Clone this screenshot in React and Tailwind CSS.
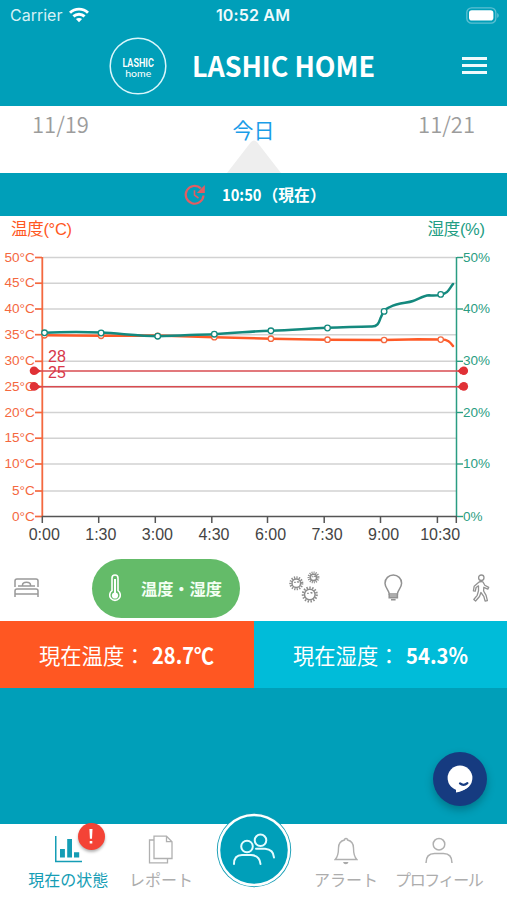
import React from "react";

const ORANGE = "#f4683f";
const GREEN = "#2a9d82";

function StatusBar() {
  return (
    <div className="flex h-[30px] items-center justify-between pl-[10px] pr-[8px] text-white">
      <div className="flex w-[147px] items-center gap-[7px]">
        <span className="font-['Inter'] text-[16px] leading-[20px] tracking-[0px] text-[#d5f1f6]">Carrier</span>
        <svg width="20" height="16" viewBox="0 0 20 16" fill="none" stroke="#fff" strokeWidth="2.9">
          <path d="M1 5.8C6 0.9 14 0.9 19 5.8" />
          <path d="M4.4 9.4C7.6 6.5 12.4 6.5 15.6 9.4" />
          <path d="M10 15.2L6.9 12.1C8.6 10.6 11.4 10.6 13.1 12.1Z" fill="#fff" stroke="none" />
        </svg>
      </div>
      <span className="font-['Inter'] text-[16px] font-semibold leading-[20px] tracking-[0.15px] text-[#effafc]">10:52 AM</span>
      <div className="flex w-[150px] justify-end">
        <svg width="33" height="17" viewBox="0 0 33 17">
          <rect x="0.8" y="0.8" width="29" height="15.4" rx="4.8" fill="none" stroke="#5cc0d2" strokeWidth="1.3" />
          <rect x="3" y="3.2" width="24.4" height="10.4" rx="2.8" fill="#fff" />
          <path d="M31.2 6v5q1.6-.8 1.6-2.5t-1.6-2.5" fill="#5cc0d2" />
        </svg>
      </div>
    </div>
  );
}

function Header() {
  return (
    <header className="h-[106px] bg-[#009fb9]">
      <StatusBar />
      <div className="flex h-[72px] items-center pl-[109px] pr-[20px]">
        <svg width="58" height="58" viewBox="0 0 58 58" fill="#fff">
          <circle cx="29" cy="29" r="27.8" fill="none" stroke="#d9f6fb" strokeWidth="1.5" />
          <text x="13.4" y="30" fontFamily="Roboto, sans-serif" fontSize="12.6" fontWeight="600" textLength="31.4" lengthAdjust="spacingAndGlyphs">LASHIC</text>
          <text x="16.2" y="40.2" fontFamily="Lato, sans-serif" fontSize="9" textLength="26" lengthAdjust="spacingAndGlyphs">home</text>
        </svg>
        <h1 className="ml-[25px]">
          <svg className="block overflow-visible" width="184" height="40">
            <text x="0" y="30.5" fill="#fff" fontSize="27.5" fontWeight="700" textLength="183" lengthAdjust="spacingAndGlyphs">LASHIC HOME</text>
          </svg>
        </h1>
        <div className="-mt-px ml-auto flex flex-col gap-[4px]">
          <div className="h-[3px] w-[25px] bg-[#effafc]" />
          <div className="h-[3px] w-[25px] bg-[#effafc]" />
          <div className="h-[3px] w-[25px] bg-[#effafc]" />
        </div>
      </div>
    </header>
  );
}

function DateRow() {
  return (
    <div className="flex h-[67px] justify-between bg-white pl-[32px] pr-[32px] text-[#9c9c9c]">
      <span className="mt-[2px] w-[60px] text-[22px] font-[350] leading-[30px]">11/19</span>
      <div className="flex flex-col items-center">
        <span className="mt-[8px] text-[21px] leading-[30px] text-[#1a9de8]">今日</span>
        <svg className="-mt-[5px]" width="54" height="34" viewBox="0 0 54 34">
          <path d="M0 34L24 3Q27 0 30 3L54 34Z" fill="#eee" />
        </svg>
      </div>
      <span className="mt-[2px] w-[60px] text-right text-[22px] font-[350] leading-[30px]">11/21</span>
    </div>
  );
}

function TimeBar() {
  return (
    <div className="flex h-[43px] items-center bg-[#009fb9] pl-[183px]">
      <svg width="24" height="24" viewBox="0 0 24 24" fill="none" stroke="#e35d62" strokeWidth="2.2">
        <path d="M20.5 12.5A8.9 8.9 0 1 1 17.8 5.4" />
        <path d="M11.5 7.2v5l4 2.8" strokeWidth="1.6" />
        <path d="M21.8 2v8h-8Z" fill="#e35d62" stroke="none" />
      </svg>
      <svg className="ml-[15px] block overflow-visible" width="100" height="24" fill="#fff" fontWeight="700">
        <text x="0" y="18" fontSize="16.5" textLength="39.5" lengthAdjust="spacingAndGlyphs">10:50</text>
        <text x="40.5" y="18" fontSize="15.8">（現在）</text>
      </svg>
    </div>
  );
}

const gridY = [41.5, 67.2, 93, 118.7, 145.3, 170.6, 196.5, 222.2, 248, 275, 300.5];
const tempLabels = ["50°C", "45°C", "40°C", "35°C", "30°C", "25°C", "20°C", "15°C", "10°C", "5°C", "0°C"];
const humLabels = [
  ["50%", 41.5], ["40%", 93], ["30%", 145.3], ["20%", 196.5], ["10%", 248], ["0%", 300.5],
];
const times = ["0:00", "1:30", "3:00", "4:30", "6:00", "7:30", "9:00", "10:30"];
const tempDots = [119.3, 119.8, 119.8, 121.2, 122.7, 123.7, 124, 123.6];
const humDots = [116.8, 117, 120.2, 118.2, 114.8, 112, 95.4, 78.4];

function Chart() {
  return (
    <svg className="block bg-white" width="507" height="329" viewBox="0 0 507 329" fontFamily="'Liberation Sans', sans-serif">
      <g fontSize="16.5">
        <text x="11" y="19" fill="#ff5722" fontFamily="'Liberation Sans','Noto Sans CJK JP',sans-serif" textLength="61">温度(°C)</text>
        <text x="427.5" y="19" fill="#229d83" fontFamily="'Liberation Sans','Noto Sans CJK JP',sans-serif" textLength="57.5">湿度(%)</text>
      </g>
      {gridY.slice(0, -1).map((y) => (
        <path key={y} d={`M43 ${y}H456`} stroke="#d2d2d2" strokeWidth="1.6" />
      ))}
      {gridY.map((y, i) => (
        <g key={y}>
          <path d={`M35 ${y}h7`} stroke={ORANGE} strokeWidth="1.7" />
          <text x="34.8" y={y + 4} textAnchor="end" fontSize="13.6" fill={ORANGE}>{tempLabels[i]}</text>
        </g>
      ))}
      {humLabels.map(([label, y]) => (
        <g key={label}>
          <path d={`M457 ${y}h6`} stroke={GREEN} strokeWidth="1.4" />
          <text x="463" y={y + 4} fontSize="13.5" fill={GREEN}>{label}</text>
        </g>
      ))}
      <path d="M42.3 41v260" stroke={ORANGE} strokeWidth="1.8" />
      <path d="M456.5 41v260" stroke={GREEN} strokeWidth="1.5" />
      <path d="M42 300.5H457" stroke="#555" strokeWidth="1.6" />
      {[42.3, 98.7, 155.3, 211.8, 267.5, 324.2, 380.5, 437.4, 456.3].map((x) => (
        <path key={x} d={`M${x} 300v7`} stroke="#555" strokeWidth="1.5" />
      ))}
      {times.map((t, i) => (
        <text key={t} x={44.3 + i * 56.55} y="324.4" textAnchor="middle" fontSize="16" fill="#444">{t}</text>
      ))}
      <path stroke="#ff5a27" fill="none" strokeLinecap="round" strokeWidth="2.5" d="M44 119.3L101 119.8L158 119.5L214 121.2L271 122.7L327 123.7L384 124C400 124 408 123.5 418 123.3L441 123.6C448 123.5 450 126 453 130" />
      {tempDots.map((y, i) => (
        <circle key={i} cx={44.5 + i * 56.6} cy={y} r="2.7" fill="#fff" stroke="#f4683f" strokeWidth="1.3" />
      ))}
      <path d="M44 116.8C65 115.8 82 115.8 101 116.5C120 117.5 140 120 158 120.2C180 119.7 195 118.7 214 118.2C240 117 250 115.2 271 114.7C293 114.5 306 112.3 327 111.8C347 111.5 357 110.5 372 110.6C379 110.5 379 105 381 101C384 93 386 93 390 91C399 86.5 407 87.3 413 85C418 83.5 423 79.6 429 79.3C434 80 438 79.4 441 78.3C448 77.8 449 73 453 68" fill="none" stroke="#14897e" strokeWidth="2.5" strokeLinecap="round" />
      {humDots.map((y, i) => (
        <circle key={i} cx={44.5 + i * 56.6} cy={y} r="2.8" fill="#fff" stroke="#14897e" strokeWidth="1.3" />
      ))}
      {[155, 170.7].map((y) => (
        <g key={y} fill="#e03136">
          <path d={`M34 ${y}H463`} stroke="#d84b50" strokeWidth="1.5" />
          <circle cx="34" cy={y - 0.3} r="4.3" />
          <path d={`M36 ${y - 3.5}L41 ${y}L36 ${y + 3.5}Z`} />
          <circle cx="463.8" cy={y - 0.3} r="4.3" />
          <path d={`M461 ${y - 3.5}L457.5 ${y}L461 ${y + 3.5}Z`} />
        </g>
      ))}
      <g fill="#d7374a" fontSize="16">
        <text x="48" y="146">28</text>
        <text x="48" y="161.8">25</text>
      </g>
    </svg>
  );
}

function Gear({ x, y, r }) {
  const circumference = 2 * Math.PI * (r + 1.6);
  const tooth = circumference / 30;
  return (
    <g fill="none" stroke="#8c8c8c">
      <circle cx={x} cy={y} r={r} strokeWidth="1.5" />
      <circle cx={x} cy={y} r={r + 1.6} strokeWidth="2.3" strokeDasharray={`${tooth} ${tooth}`} />
      <path d={`M${x - r * 0.5} ${y - r * 0.2}h1.6M${x + 0.6} ${y - r * 0.35}h1.4v1`} strokeWidth="1.2" />
    </g>
  );
}

function SensorTabs() {
  return (
    <div className="flex h-[76px] items-center bg-white pl-[14px]">
      <svg className="mt-[10px]" width="26" height="22" viewBox="0 0 26 22" fill="none" stroke="#999" strokeWidth="1.5">
        <path d="M1 10V4Q1 2 3 2H22Q24 2 24 4V10M4 9H21M8.5 9V8Q8.5 5.2 12.5 5.2T16.5 8V9" />
        <path d="M1 20V14Q1 12 3 12H22Q24 12 24 14V20M1 17H24" />
      </svg>
      <div className="ml-[52px] mt-[10px] flex h-[59px] w-[148px] items-center rounded-full bg-[#64bb69]">
        <svg className="ml-[17px]" width="12" height="28" viewBox="0 0 12 28" fill="none" stroke="#fff">
          <path d="M3 16.7V4Q3 1 6 1T9 4V16.7A5.3 5.3 0 1 1 3 16.7Z" strokeWidth="1.6" />
          <circle cx="6" cy="21.5" r="3.1" fill="#fff" stroke="none" />
          <path d="M6 5v15" strokeWidth="2" />
        </svg>
        <span className="ml-[20px] whitespace-nowrap text-[16.2px] font-bold leading-[24px] text-[#f4fff4]">温度・湿度</span>
      </div>
      <svg className="ml-[48px] mt-[9px]" width="33" height="33" viewBox="0 0 33 33">
        <Gear x={8.3} y={12.3} r={4.3} />
        <Gear x={25.5} y={6.4} r={3.2} />
        <Gear x={21.8} y={23.5} r={5.3} />
      </svg>
      <svg className="ml-[63px] mt-[9px]" width="19" height="28" viewBox="0 0 19 28" fill="none" stroke="#929292" strokeWidth="1.5">
        <path d="M5.2 20C5.2 16.5 1 13.8 1 9.2A8.3 8.2 0 0 1 17.6 9.2C17.6 13.8 13.4 16.5 13.4 20Z" />
        <path d="M5.2 20v3.7h8.2V20M5.2 22h8.2M7 25.8h4.6" />
      </svg>
      <svg className="ml-[69px] mt-[9px]" width="18" height="28" viewBox="0 0 18 28" fill="none" stroke="#929292" strokeWidth="1.3" strokeLinejoin="round">
        <circle cx="9.3" cy="3.7" r="2.7" />
        <path d="M6.8 8.3Q8.6 6.9 11 8L12.8 11.3L16.7 13.4L15.8 15.1L11.8 13.3L11.6 17L14.1 21.4L15.4 26.6L13.1 27L11.8 22.3L8.9 18.5L7.5 22.5L3.6 27L1.8 25.5L5.2 21.3L6.5 16.7L6.5 11.8L4.1 13.5L3.3 17.2L1.4 16.8L2.2 12.2Z" />
      </svg>
    </div>
  );
}

function Reading({ label, value, color }) {
  return (
    <div className={`flex h-[67px] flex-1 items-center pl-[39px] pt-[3px] ${color}`}>
      <svg className="block overflow-visible" width="180" height="34" fill="#fff">
        <text x="0" y="25" fontSize="21.3">{label}</text>
        <text x="113" y="25" fontSize="22" fontWeight="700" textLength="62" lengthAdjust="spacingAndGlyphs">{value}</text>
      </svg>
    </div>
  );
}

function NavItem({ label, active, tight, children }) {
  return (
    <div className={`flex w-[92.6px] flex-col items-center ${active ? "text-[#159db5]" : "text-[#adadad]"}`}>
      <div className="flex h-[42px] items-end">{children}</div>
      <span className={`mt-px whitespace-nowrap text-[16px] leading-[24px] ${tight ? "tracking-[-1.4px]" : ""}`}>{label}</span>
    </div>
  );
}

function BottomNav() {
  return (
    <nav className="flex h-[76px] justify-center bg-white">
      <NavItem label="現在の状態" active>
        <div className="relative">
          <svg className="mb-[3px]" width="27" height="28" viewBox="0 0 27 28" fill="#159db5">
            <path d="M0 1h1.5v24.8H27v1.5H0z" />
            <path d="M5 14h4.9v8.5H5zM12.2 4H17v18.5h-4.8zM19 17.3h5.2v5.2H19z" />
          </svg>
          <div className="absolute -top-[12px] left-[23px] flex h-[27px] w-[27px] items-center justify-center rounded-full bg-[#f44336] shadow-[0_2px_3px_rgba(0,0,0,0.3)]">
            <svg width="4" height="15" viewBox="0 0 4 15" fill="#fff"><path d="M.4 0h3.1L3 9.8H.9zM.7 12h2.6v2.4H.7z" /></svg>
          </div>
        </div>
      </NavItem>
      <NavItem label="レポート">
        <svg className="mb-[2px]" width="25" height="29" viewBox="0 0 25 29" fill="none" stroke="#b0b0b0" strokeWidth="1.3">
          <path d="M6 5H1.5V27.8H19.5V24" />
          <path d="M6 1.2H18.5L24 6.7V23.5H6ZM18.5 1.2V6.7H24" />
        </svg>
      </NavItem>
      <div className="relative w-[92.6px]">
        <svg className="absolute -top-[12px] left-[8.8px]" width="76" height="76" viewBox="0 0 76 76" fill="none">
          <circle cx="38" cy="38" r="37.2" fill="#159db5" />
          <circle cx="38" cy="38" r="35" fill="#009fb9" stroke="#fff" strokeWidth="2.5" />
          <g stroke="#e4fcff" strokeWidth="2" strokeLinecap="round">
            <circle cx="31" cy="34.5" r="5.8" />
            <path d="M18 52C18 46 21 43 26 43H35Q43.8 43.5 44.5 52" />
            <circle cx="44.5" cy="28.3" r="5.8" />
            <path d="M40 36.8H49Q57.5 37.6 58 45.5" />
          </g>
        </svg>
      </div>
      <NavItem label="アラート">
        <svg className="mb-[1px]" width="24" height="28" viewBox="0 0 24 28" fill="none" stroke="#b0b0b0" strokeWidth="1.4">
          <path d="M1.2 22.5Q4.5 19 4.5 11C4.5 5.5 7.5 3.7 10.5 3V2.3Q12 .6 13.5 2.3V3C16.5 3.7 19.5 5.5 19.5 11Q19.5 19 22.8 22.5Z" />
          <path d="M9 25h5.5Q14 27.2 11.8 27.2T9 25" fill="#aaa" stroke="none" />
        </svg>
      </NavItem>
      <NavItem label="プロフィール" tight>
        <svg className="mb-[2px]" width="28" height="27" viewBox="0 0 28 27" fill="none" stroke="#b0b0b0" strokeWidth="1.5">
          <circle cx="14" cy="7.2" r="5.8" />
          <path d="M1 26C1 19 4.5 16.6 9.5 16.6H18.5C23.5 16.6 27 19 27 26" />
        </svg>
      </NavItem>
    </nav>
  );
}

export default function App() {
  return (
    <div className="h-[900px] w-[507px] overflow-hidden bg-white font-['Noto_Sans_CJK_JP',sans-serif]">
      <Header />
      <DateRow />
      <TimeBar />
      <Chart />
      <SensorTabs />
      <div className="flex">
        <Reading label="現在温度：" value="28.7℃" color="bg-[#ff5722]" />
        <Reading label="現在湿度：" value="54.3%" color="bg-[#00bcd9]" />
      </div>
      <div className="flex h-[136px] items-start justify-end bg-[#009fb9] pr-[20px] pt-[64px]">
        <div className="flex h-[54px] w-[54px] items-center justify-center rounded-full bg-[#163b80] shadow-[0_4px_8px_rgba(0,0,0,0.25)]">
          <svg width="26" height="28" viewBox="0 0 26 28">
            <circle cx="13" cy="13" r="12.4" fill="#fff" />
            <path d="M9 23L9 27.6C14 26.6 19 24.5 22.3 21Z" fill="#fff" />
            <path d="M13 18.4Q16.5 21.4 20.4 18.2" fill="none" stroke="#163b80" strokeWidth="2.2" strokeLinecap="round" />
          </svg>
        </div>
      </div>
      <BottomNav />
    </div>
  );
}
